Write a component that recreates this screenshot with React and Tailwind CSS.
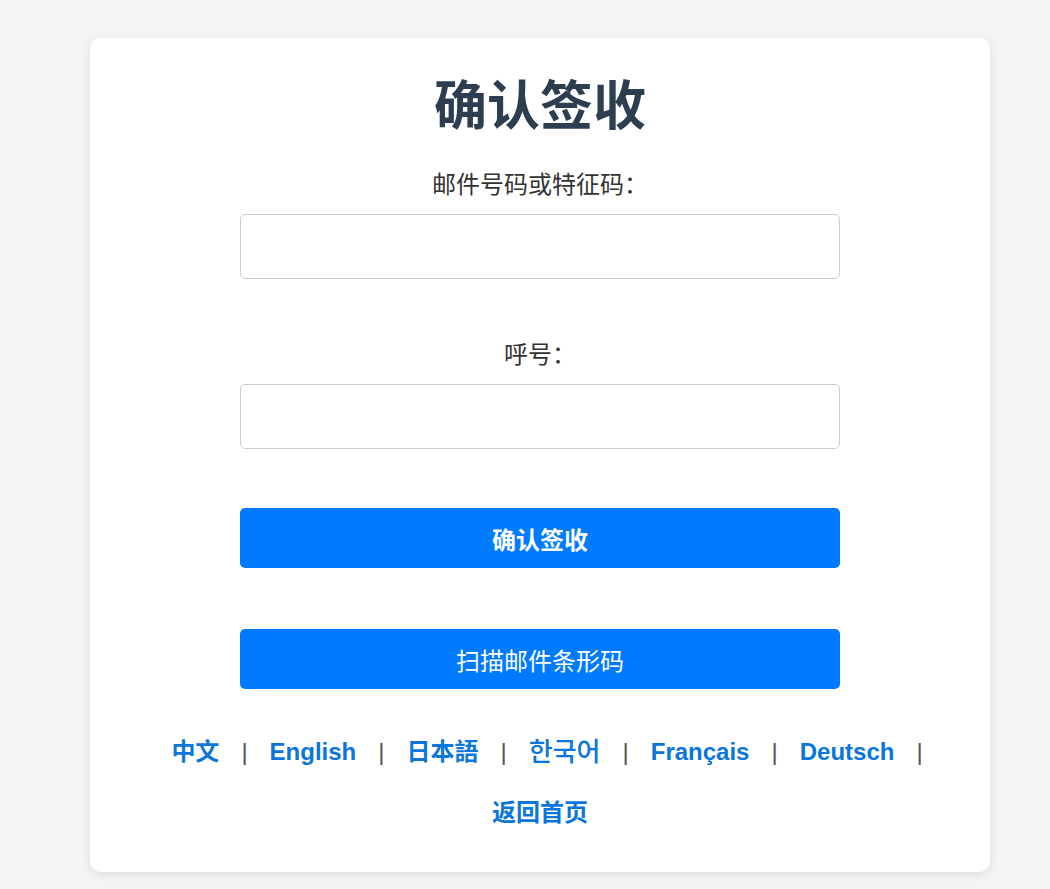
import React from "react";

const font = { fontFamily: '"Liberation Sans", "Noto Sans CJK SC", sans-serif' };

function Sep() {
  return <span className="text-[#555] text-[24px] leading-[36px] font-normal">|</span>;
}

export default function App() {
  const langs = [
    { t: "中文", w: "font-bold text-[24px]" },
    { t: "English", w: "font-bold text-[24px]" },
    { t: "日本語", w: "font-bold text-[24px]" },
    { t: "한국어", w: "font-medium text-[26px]" },
    { t: "Français", w: "font-bold text-[24px]" },
    { t: "Deutsch", w: "font-bold text-[24px]" },
  ];
  return (
    <div className="min-h-screen bg-[#f4f4f4] pt-[38px] pb-[17px] pl-[30px] flex justify-center" style={font}>
      <div className="w-[900px] bg-white rounded-[10px] shadow-[0_2px_10px_rgba(0,0,0,0.1)] flex flex-col items-center pt-[38px] pb-[41px]">
        <h1 className="text-[53px] leading-[62px] font-bold text-[#2c3e50]">确认签收</h1>
        <label className="mt-[29px] text-[24px] leading-[36px] text-[#333]">邮件号码或特征码：</label>
        <input className="mt-[11px] w-[600px] h-[65px] border border-[#ccc] rounded-[5px] outline-none px-3" />
        <label className="mt-[58px] text-[24px] leading-[36px] text-[#333]">呼号：</label>
        <input className="mt-[11px] w-[600px] h-[65px] border border-[#ccc] rounded-[5px] outline-none px-3" />
        <button className="mt-[59px] w-[600px] h-[60px] pt-[5px] rounded-[5px] bg-[#007bff] text-white text-[24px] font-bold">确认签收</button>
        <button className="mt-[61px] w-[600px] h-[60px] pt-[5px] rounded-[5px] bg-[#007bff] text-white text-[24px]">扫描邮件条形码</button>
        <div className="mt-[45px] flex items-center gap-[22px] pl-[14px]">
          {langs.map((l, i) => (
            <React.Fragment key={i}>
              <a className={`leading-[36px] text-[#0a76db] ${l.w}`}>{l.t}</a>
              <Sep />
            </React.Fragment>
          ))}
        </div>
        <a className="mt-[25px] text-[24px] leading-[36px] font-bold text-[#0a76db]">返回首页</a>
      </div>
    </div>
  );
}
